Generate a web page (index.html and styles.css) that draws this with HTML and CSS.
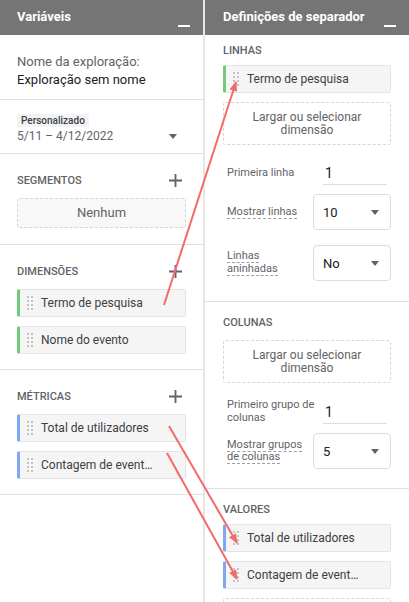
FILE: index.html
```html
<!DOCTYPE html>
<html lang="pt">
<head>
<meta charset="utf-8">
<title>Exploração</title>
<link rel="stylesheet" href="styles.css">
</head>
<body>
<div class="page">
  <aside class="panel panel-left">
    <div class="panel-head"><span class="panel-title">Variáveis</span><span class="minimize"></span></div>
    <div class="sec sec-name">
      <div class="muted-line">Nome da exploração:</div>
      <div class="dark-line">Exploração sem nome</div>
    </div>
    <div class="sec sec-date">
      <span class="mini-chip">Personalizado</span>
      <div class="date-row"><span>5/11 – 4/12/2022</span><span class="caret"></span></div>
    </div>
    <div class="sec sec-block sec-seg">
      <div class="sec-title-row"><span class="sec-title">SEGMENTOS</span><svg class="plus" viewBox="0 0 14 14"><path d="M7 0V14M0 7H14"/></svg></div>
      <div class="dropzone single">Nenhum</div>
    </div>
    <div class="sec sec-block">
      <div class="sec-title-row"><span class="sec-title">DIMENSÕES</span><svg class="plus" viewBox="0 0 14 14"><path d="M7 0V14M0 7H14"/></svg></div>
      <div class="chip dim"><span class="handle"></span><span class="chip-text">Termo de pesquisa</span></div>
      <div class="chip dim"><span class="handle"></span><span class="chip-text">Nome do evento</span></div>
    </div>
    <div class="sec sec-block">
      <div class="sec-title-row"><span class="sec-title">MÉTRICAS</span><svg class="plus" viewBox="0 0 14 14"><path d="M7 0V14M0 7H14"/></svg></div>
      <div class="chip met"><span class="handle"></span><span class="chip-text">Total de utilizadores</span></div>
      <div class="chip met"><span class="handle"></span><span class="chip-text">Contagem de event…</span></div>
    </div>
  </aside>
  <section class="panel panel-right">
    <div class="panel-head"><span class="panel-title">Definições de separador</span><span class="minimize"></span></div>
    <div class="rsec rsec-first">
      <div class="rtitle">LINHAS</div>
      <div class="chip dim"><span class="handle"></span><span class="chip-text">Termo de pesquisa</span></div>
      <div class="dropzone double">Largar ou selecionar<br>dimensão</div>
      <div class="form-row row-input">
        <span class="label">Primeira linha</span>
        <span class="text-input">1</span>
      </div>
      <div class="form-row row-select">
        <span class="label"><span class="dashed">Mostrar linhas</span></span>
        <span class="select"><span>10</span><span class="caret"></span></span>
      </div>
      <div class="form-row row-select row-last">
        <span class="label"><span class="dashed">Linhas<br>aninhadas</span></span>
        <span class="select"><span>No</span><span class="caret"></span></span>
      </div>
    </div>
    <div class="rsec rsec-cols">
      <div class="rtitle">COLUNAS</div>
      <div class="dropzone double">Largar ou selecionar<br>dimensão</div>
      <div class="form-row row-input">
        <span class="label">Primeiro grupo de colunas</span>
        <span class="text-input">1</span>
      </div>
      <div class="form-row row-select row-last">
        <span class="label"><span class="dashed">Mostrar grupos de colunas</span></span>
        <span class="select"><span>5</span><span class="caret"></span></span>
      </div>
    </div>
    <div class="rsec rsec-values">
      <div class="rtitle">VALORES</div>
      <div class="chip met"><span class="handle"></span><span class="chip-text">Total de utilizadores</span></div>
      <div class="chip met"><span class="handle"></span><span class="chip-text">Contagem de event…</span></div>
      <div class="dropzone double empty"></div>
    </div>
  </section>
  <svg class="arrows" viewBox="0 0 409 602" width="409" height="602">
    <defs>
      <marker id="ah" markerWidth="10" markerHeight="8" refX="9" refY="4" orient="auto" markerUnits="userSpaceOnUse">
        <path d="M0 0L10 4L0 8Z" fill="#f46a6a"/>
      </marker>
    </defs>
    <line x1="164" y1="305" x2="236" y2="82" marker-end="url(#ah)"/>
    <line x1="169" y1="426" x2="237" y2="543" marker-end="url(#ah)"/>
    <line x1="167" y1="453" x2="237" y2="579" marker-end="url(#ah)"/>
  </svg>
</div>
</body>
</html>
```

FILE: styles.css
```css
* { box-sizing: border-box; }
html, body { margin: 0; padding: 0; }
body {
  font-family: Roboto, "Liberation Sans", Arial, sans-serif;
  color: #3c4043;
  background: #fff;
  width: 409px;
  height: 602px;
  overflow: hidden;
}
.page {
  position: relative;
  display: flex;
  width: 409px;
  height: 602px;
  overflow: hidden;
}
.panel { display: flex; flex-direction: column; }
.panel-left { width: 205px; border-right: 2px solid #e6e6e6; flex: none; }
.panel-right { width: 204px; flex: none; }
.panel-head {
  height: 35px;
  background: #757575;
  display: flex;
  align-items: center;
  justify-content: space-between;
  padding: 0 13px 0 17px;
  flex: none;
}
.panel-right .panel-head { padding-left: 18px; padding-right: 13px; }
.panel-title {
  color: #fff;
  font-weight: 700;
  font-size: 13px;
  margin-top: -2px;
}
.minimize {
  width: 12px;
  height: 2px;
  background: #fff;
  margin-top: 16px;
}
.sec { border-bottom: 1px solid #e0e0e0; padding: 0 17px; }
.sec-name { padding-top: 18px; padding-bottom: 10px; font-size: 13px; line-height: 18px; }
.muted-line { color: #5f6368; }
.dark-line { color: #202124; }
.sec-date {
  display: flex;
  flex-direction: column;
  align-items: flex-start;
  padding-top: 14px;
  padding-bottom: 8px;
}
.mini-chip {
  display: block;
  background: #f1f3f4;
  color: #3c4043;
  font-size: 10px;
  font-weight: 500;
  height: 13px;
  line-height: 13px;
  padding: 0 4px;
}
.date-row {
  align-self: stretch;
  display: flex;
  justify-content: space-between;
  align-items: center;
  font-size: 12px;
  line-height: 18px;
  color: #5f6368;
  padding-right: 9px;
}
.caret {
  width: 0; height: 0;
  border-left: 4.5px solid transparent;
  border-right: 4.5px solid transparent;
  border-top: 5px solid #5f6368;
}
.sec-block { padding-top: 18px; padding-bottom: 15px; }
.sec-seg { padding-bottom: 16px; }
.sec-title-row {
  display: flex;
  justify-content: space-between;
  align-items: center;
  height: 16px;
  margin-bottom: 10px;
  padding-right: 4px;
}
.sec-title { font-size: 11px; font-weight: 500; color: #5f6368; }
.plus { width: 13px; height: 13px; }
.plus path { stroke: #5f6368; stroke-width: 2; fill: none; }
.dropzone {
  border: 1px dashed #d5d5d5;
  border-radius: 3px;
  text-align: center;
  color: #5f6368;
  font-size: 12px;
}
.dropzone.single { height: 30px; line-height: 28px; background: #f8f8f8; font-size: 13px; }
.dropzone.double { height: 43px; line-height: 13px; padding-top: 8px; background: #fff; margin-top: 9px; }
.chip {
  display: flex;
  align-items: center;
  height: 28px;
  background: #f5f5f5;
  border: 1px solid #e4e4e4;
  border-radius: 2px;
  font-size: 12px;
  color: #3c4043;
  padding-left: 7px;
}
.chip + .chip { margin-top: 9px; }
.chip.dim { border-left: 3px solid #6fcb7a; }
.chip.met { border-left: 3px solid #7ea9f2; }
.handle {
  width: 6px;
  height: 14px;
  margin-right: 8px;
  background-image: radial-gradient(circle, #c4c4c4 0.9px, transparent 1.1px);
  background-size: 4px 4px;
  background-position: -1px -1px;
  flex: none;
}
.chip-text { white-space: nowrap; }
.rsec { border-bottom: 1px solid #e0e0e0; padding: 13px 18px 0 18px; }
.rsec-first { padding-top: 8px; }
.rsec-values { border-bottom: none; }
.rtitle {
  font-size: 11px;
  font-weight: 500;
  color: #5f6368;
  height: 16px;
  line-height: 16px;
  margin-bottom: 6px;
}
.form-row {
  display: flex;
  align-items: center;
  padding-left: 4px;
}
.label {
  width: 88px;
  margin-right: -2px;
  flex: none;
  font-size: 11px;
  line-height: 12.6px;
  color: #5f6368;
}
.dashed { border-bottom: 1px dashed #9aa0a6; }
.row-input { margin-top: 16px; }
.text-input {
  margin-left: 10px;
  width: 64px;
  height: 24px;
  line-height: 24px;
  border-bottom: 1px solid #dadce0;
  font-size: 14px;
  color: #202124;
  padding-left: 2px;
}
.row-input + .row-select { margin-top: 9px; }
.row-select + .row-select { margin-top: 15px; }
.select {
  width: 78px;
  height: 36px;
  border: 1px solid #dadce0;
  border-radius: 4px;
  display: flex;
  align-items: center;
  justify-content: space-between;
  padding: 0 11px 0 9px;
  font-size: 13px;
  color: #202124;
}
.row-last { margin-bottom: 20px; }
.rsec-cols .row-last { margin-bottom: 19px; }
.dropzone.empty { margin-top: 9px; }
.arrows {
  position: absolute;
  left: 0; top: 0;
  pointer-events: none;
}
.arrows line { stroke: #f46a6a; stroke-width: 2; }
```
